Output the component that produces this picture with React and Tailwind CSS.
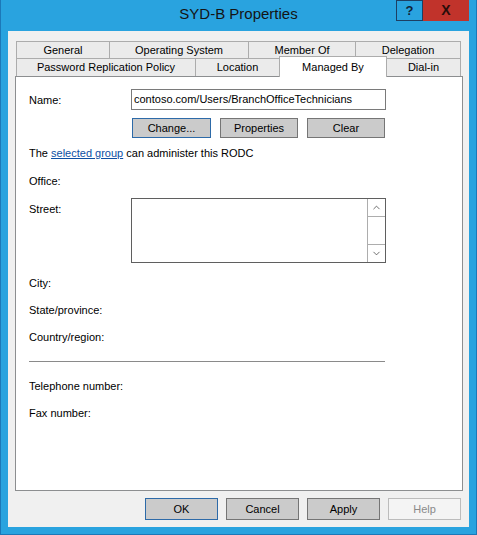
import { ChevronUp, ChevronDown } from "lucide-react";

const row1 = [
  { label: "General", w: "w-[93px]" },
  { label: "Operating System", w: "w-[139px]" },
  { label: "Member Of", w: "w-[107px]" },
  { label: "Delegation", w: "w-[106px]" },
];

function Btn({ children, w = "w-[73px]", h = "h-[22px]", focus, disabled }) {
  return (
    <button
      className={`${w} ${h} flex items-center justify-center border ${
        disabled
          ? "bg-[#f4f4f4] border-[#bcbcbc] text-[#8a8a8a]"
          : focus
          ? "bg-[#cbcbcb] border-[#2d6aa8] text-black"
          : "bg-[#cbcbcb] border-[#757575] text-black"
      }`}
    >
      {children}
    </button>
  );
}

function Label({ children, className = "" }) {
  return <div className={`h-4 leading-4 ${className}`}>{children}</div>;
}

export default function App() {
  return (
    <div className="w-[477px] h-[535px] bg-[#29a3df] border-x border-b border-[#1c78b8] flex flex-col font-['Liberation_Sans',Arial,sans-serif] text-[11px] text-black">
      {/* Title bar */}
      <div className="h-[31px] flex">
        <div className="w-[80px]" />
        <div className="flex-1 flex items-center justify-center pb-[2px] text-[15px] text-[#141414]">
          SYD-B Properties
        </div>
        <div className="w-[80px] flex items-start">
          <div className="w-[27px] h-[21px] border border-[#1d3f63] flex items-center justify-center text-[13px] font-bold text-[#10233a]">
            ?
          </div>
          <div className="w-[46px] h-[21px] bg-[#c1332b] flex items-center justify-center text-[14px] font-bold text-[#2a0d0a]">
            X
          </div>
        </div>
      </div>

      {/* Client area */}
      <div className="mx-[7px] flex-1 mb-[7px] bg-[#f0f0f0] flex flex-col pt-[10px] pl-[7px] pr-[6px] pb-[7px]">
        {/* Tabs */}
        <div className="ml-px flex flex-col">
          <div className="flex h-[17px]">
            {row1.map((t, i) => (
              <div
                key={t.label}
                className={`${t.w} border-t border-l ${i === row1.length - 1 ? "border-r" : ""} border-[#acacac] bg-[#ebebeb] flex items-center justify-center leading-none`}
              >
                {t.label}
              </div>
            ))}
          </div>
          <div className="flex h-[18px] items-end">
            <div className="w-[179px] h-[18px] border-t border-l border-[#acacac] bg-[#ebebeb] flex items-center justify-center">
              Password Replication Policy
            </div>
            <div className="w-[84px] h-[18px] border-t border-l border-[#acacac] bg-[#ebebeb] flex items-center justify-center">
              Location
            </div>
            <div className="w-[108px] h-[21px] -mb-px relative z-10 border-t border-x border-[#acacac] bg-white flex items-start justify-center pt-[2px]">
              Managed By
            </div>
            <div className="w-[74px] h-[18px] border-t border-r border-[#acacac] bg-[#ebebeb] flex items-center justify-center">
              Dial-in
            </div>
          </div>
        </div>

        {/* Panel */}
        <div className="w-[448px] h-[415px] bg-white border border-[#8c8e90] pl-[13px] flex flex-col">
          <div className="mt-[12px] flex">
            <div className="w-[102px] pt-[3px]">
              <Label>Name:</Label>
            </div>
            <div className="w-[255px] h-[21px] border border-[#7a7a7a] flex items-center pl-[2px]">
              contoso.com/Users/BranchOfficeTechnicians
            </div>
          </div>

          <div className="mt-[8px] ml-[103px] flex gap-[9px]">
            <Btn w="w-[79px]" h="h-[20px]" focus>
              Change...
            </Btn>
            <Btn w="w-[78px]" h="h-[20px]">
              Properties
            </Btn>
            <Btn w="w-[78px]" h="h-[20px]">
              Clear
            </Btn>
          </div>

          <Label className="mt-[7px]">
            The{" "}
            <span className="text-[#0d4fa3] underline decoration-[#0d4fa3]">
              selected group
            </span>{" "}
            can administer this RODC
          </Label>

          <Label className="mt-[12px]">Office:</Label>

          <div className="mt-[9px] flex">
            <div className="w-[102px] pt-[3px]">
              <Label>Street:</Label>
            </div>
            <div className="w-[255px] h-[65px] border border-[#5f5f5f] flex justify-end">
              <div className="w-[18px] flex flex-col border-l border-[#adadad]">
                <div className="h-[18px] border-b border-[#adadad] flex items-center justify-center">
                  <ChevronUp size={11} strokeWidth={1.6} className="text-[#3c3c3c]" />
                </div>
                <div className="flex-1" />
                <div className="h-[18px] border-t border-[#adadad] flex items-center justify-center">
                  <ChevronDown size={11} strokeWidth={1.6} className="text-[#3c3c3c]" />
                </div>
              </div>
            </div>
          </div>

          <Label className="mt-[12px]">City:</Label>
          <Label className="mt-[11px]">State/province:</Label>
          <Label className="mt-[11px]">Country/region:</Label>

          <div className="mt-[16px] w-[356px] h-px bg-[#8a8a8a]" />

          <Label className="mt-[16px]">Telephone number:</Label>
          <Label className="mt-[11px]">Fax number:</Label>
        </div>

        {/* Dialog buttons */}
        <div className="mt-[7px] mr-[2px] flex justify-end gap-[8px]">
          <Btn focus>OK</Btn>
          <Btn>Cancel</Btn>
          <Btn>Apply</Btn>
          <Btn disabled>Help</Btn>
        </div>
      </div>
    </div>
  );
}
